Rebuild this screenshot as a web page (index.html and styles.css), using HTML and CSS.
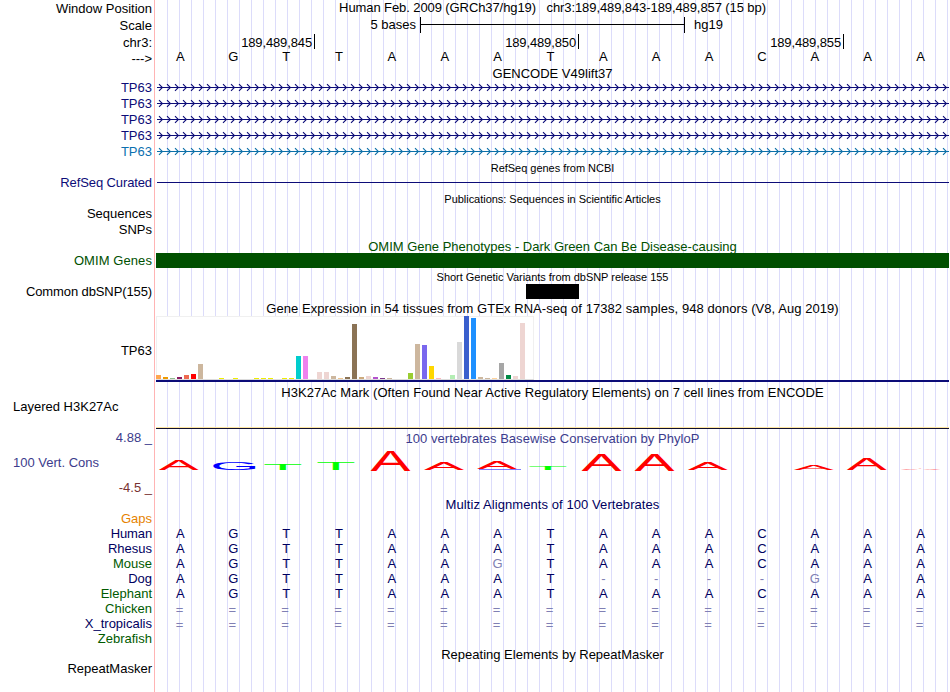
FILE: index.html
```html
<!DOCTYPE html>
<html lang="en">
<head>
<meta charset="utf-8">
<title>chr3:189,489,843-189,489,857</title>
<link rel="stylesheet" href="styles.css">
</head>
<body>
<main class="browser">
  <section class="labels">
    <div class="lb first">Window Position</div>
    <div class="lb g2">Scale</div>
    <div class="lb g2">chr3:</div>
    <div class="lb g1">---&gt;</div>
    <div class="lb g14 gene">TP63</div>
    <div class="lb g1 gene">TP63</div>
    <div class="lb g1 gene">TP63</div>
    <div class="lb g1 gene">TP63</div>
    <div class="lb g1 gene-alt">TP63</div>
    <div class="lb g16 gene tight">RefSeq Curated</div>
    <div class="lb g16">Sequences</div>
    <div class="lb g1">SNPs</div>
    <div class="lb g16 omim wide">OMIM Genes</div>
    <div class="lb g16 tight">Common dbSNP(155)</div>
    <div class="lb g44">TP63</div>
    <div class="lb g41 left">Layered H3K27Ac</div>
    <div class="lb g16 cons">4.88 _</div>
    <div class="lb g10 left cons">100 Vert. Cons</div>
    <div class="lb g10 neg">-4.5 _</div>
    <div class="lb g16 gaps">Gaps</div>
    <div class="lb navy tight">Human</div>
    <div class="lb navy">Rhesus</div>
    <div class="lb green">Mouse</div>
    <div class="lb navy">Dog</div>
    <div class="lb green">Elephant</div>
    <div class="lb green">Chicken</div>
    <div class="lb navy">X_tropicalis</div>
    <div class="lb green">Zebrafish</div>
    <div class="lb g15">RepeatMasker</div>
  </section>

  <section class="tracks">
    <div class="title position">Human Feb. 2009 (GRCh37/hg19) &nbsp; chr3:189,489,843-189,489,857 (15 bp)</div>
    <div class="scale"><span class="scale-size">5 bases</span><span class="scale-bar"></span><span class="scale-db">hg19</span></div>
    <div class="ruler"><span>189,489,845</span><span>189,489,850</span><span>189,489,855</span></div>
    <div class="bases"><i>A</i><i>G</i><i>T</i><i>T</i><i>A</i><i>A</i><i>A</i><i>T</i><i>A</i><i>A</i><i>A</i><i>C</i><i>A</i><i>A</i><i>A</i></div>

    <div class="title gencode">GENCODE V49lift37</div>
    <svg class="introns" width="793" height="79" viewBox="0 0 793 79">
      <defs>
        <pattern id="chevMain" width="8" height="16" patternUnits="userSpaceOnUse" x="2" y="0">
          <path d="M1 4.1 L4.4 7.5 L1 10.9" fill="none" stroke="#0c0c78" stroke-width="1.1"/>
        </pattern>
        <pattern id="chevAlt" width="8" height="16" patternUnits="userSpaceOnUse" x="2" y="0">
          <path d="M1 4.1 L4.4 7.5 L1 10.9" fill="none" stroke="#0c70a8" stroke-width="1.1"/>
        </pattern>
      </defs>
      <rect x="2" y="0" width="791" height="64" fill="url(#chevMain)"/>
      <rect x="2" y="64" width="791" height="15" fill="url(#chevAlt)"/>
      <path d="M1 7h792v1H1zM1 23h792v1H1zM1 39h792v1H1zM1 55h792v1H1z" fill="#0c0c78"/>
      <path d="M1 71h792v1H1z" fill="#0c70a8"/>
    </svg>

    <div class="title small refseq">RefSeq genes from NCBI</div>
    <div class="refseq-line"></div>
    <div class="title small pubs">Publications: Sequences in Scientific Articles</div>
    <div class="title omim omim-title">OMIM Gene Phenotypes - Dark Green Can Be Disease-causing</div>
    <div class="omim-bar"></div>
    <div class="title small snp-title">Short Genetic Variants from dbSNP release 155</div>
    <div class="snp"></div>

    <div class="title gtex-title">Gene Expression in 54 tissues from GTEx RNA-seq of 17382 samples, 948 donors (V8, Aug 2019)</div>
    <div class="gtex">
      <div class="bars">
        <b style="height:4px;background:#ffa54f"></b><b style="height:2px;background:#ee9a00"></b><b style="height:1px;background:#8fbc8f"></b><b style="height:2px;background:#8b1c62"></b><b style="height:4px;background:#ee6a50"></b><b style="height:5px;background:#ff0000"></b><b style="height:15px;background:#cdb79e"></b><b></b><b></b>
        <b style="height:1px;background:#eeee00"></b><b></b><b style="height:1px;background:#eeee00"></b><b></b><b></b><b style="height:1px;background:#eeee00"></b><b style="height:1px;background:#eeee00"></b><b style="height:1px;background:#eeee00"></b><b></b>
        <b style="height:1px;background:#eeee00"></b><b style="height:1px;background:#eeee00"></b><b style="height:23px;background:#00cdcd"></b><b style="height:23px;background:#ee82ee"></b><b></b><b style="height:7px;background:#eed5d2"></b><b style="height:7px;background:#eed5d2"></b><b style="height:3px;background:#cdb79e"></b><b style="height:1px;background:#eec591"></b>
        <b style="height:2px;background:#8b7355"></b><b style="height:55px;background:#8b7355"></b><b style="height:2px;background:#cdaa7d"></b><b style="height:3px;background:#eed5d2"></b><b style="height:2px;background:#b452cd"></b><b style="height:1px;background:#7a378b"></b><b style="height:1px;background:#cdb79e"></b><b></b><b></b>
        <b style="height:6px;background:#9acd32"></b><b style="height:35px;background:#cdb79e"></b><b style="height:34px;background:#7a67ee"></b><b style="height:13px;background:#ffd700"></b><b style="height:1px;background:#ffb6c1"></b><b></b><b style="height:4px;background:#b4eeb4"></b><b style="height:37px;background:#d9d9d9"></b><b style="height:63px;background:#3a5fcd"></b>
        <b style="height:61px;background:#1e90ff"></b><b style="height:2px;background:#cdb79e"></b><b style="height:1px;background:#cdb79e"></b><b style="height:1px;background:#ffd39b"></b><b style="height:16px;background:#a6a6a6"></b><b style="height:4px;background:#008b45"></b><b style="height:3px;background:#eed5d2"></b><b style="height:56px;background:#eed5d2"></b><b></b>
      </div>
    </div>

    <div class="title h3k-title">H3K27Ac Mark (Often Found Near Active Regulatory Elements) on 7 cell lines from ENCODE</div>
    <div class="h3k-line"></div>

    <div class="title cons cons-title">100 vertebrates Basewise Conservation by PhyloP</div>
    <svg class="logo" width="793" height="28" viewBox="156 446 793 28">
      <g class="la">
        <text transform="matrix(6 0 0 1.55 158.8 469.7)">A</text>
        <text transform="matrix(6 0 0 2.86 370.6 470.7)">A</text>
        <text transform="matrix(6 0 0 1.13 424 469.7)">A</text>
        <text transform="matrix(6 0 0 1.02 477 469)">A</text>
        <text transform="matrix(6 0 0 2.42 581.6 470.7)">A</text>
        <text transform="matrix(6 0 0 2.42 634.6 470.7)">A</text>
        <text transform="matrix(6 0 0 1.13 687.8 469.7)">A</text>
        <text transform="matrix(6 0 0 0.7 793.8 469.7)">A</text>
        <text transform="matrix(6 0 0 1.6 846.8 470)">A</text>
        <text transform="matrix(6 0 0 0.13 900.5 469.9)">A</text>
      </g>
      <g class="lg">
        <text transform="matrix(6.4 0 0 1.08 210 469.8)">G</text>
        <path d="M479 469h42v0.6h-42z"/>
      </g>
      <g class="lt">
        <text transform="matrix(6.5 0 0 0.88 262.9 470)">T</text>
        <text transform="matrix(6.5 0 0 1.16 315.9 470)">T</text>
        <text transform="matrix(6.5 0 0 0.57 527.9 470)">T</text>
      </g>
    </svg>

    <div class="title navy multiz">Multiz Alignments of 100 Vertebrates</div>
    <div class="alignment navy">
      <div class="bases"><i>A</i><i>G</i><i>T</i><i>T</i><i>A</i><i>A</i><i>A</i><i>T</i><i>A</i><i>A</i><i>A</i><i>C</i><i>A</i><i>A</i><i>A</i></div>
      <div class="bases"><i>A</i><i>G</i><i>T</i><i>T</i><i>A</i><i>A</i><i>A</i><i>T</i><i>A</i><i>A</i><i>A</i><i>C</i><i>A</i><i>A</i><i>A</i></div>
      <div class="bases"><i>A</i><i>G</i><i>T</i><i>T</i><i>A</i><i>A</i><i class="dim">G</i><i>T</i><i>A</i><i>A</i><i>A</i><i>C</i><i>A</i><i>A</i><i>A</i></div>
      <div class="bases"><i>A</i><i>G</i><i>T</i><i>T</i><i>A</i><i>A</i><i>A</i><i>T</i><i class="dim">-</i><i class="dim">-</i><i class="dim">-</i><i class="dim">-</i><i class="dim">G</i><i>A</i><i>A</i></div>
      <div class="bases"><i>A</i><i>G</i><i>T</i><i>T</i><i>A</i><i>A</i><i>A</i><i>T</i><i>A</i><i>A</i><i>A</i><i>C</i><i>A</i><i>A</i><i>A</i></div>
      <div class="bases dim gap"><i>=</i><i>=</i><i>=</i><i>=</i><i>=</i><i>=</i><i>=</i><i>=</i><i>=</i><i>=</i><i>=</i><i>=</i><i>=</i><i>=</i><i>=</i></div>
      <div class="bases dim gap"><i>=</i><i>=</i><i>=</i><i>=</i><i>=</i><i>=</i><i>=</i><i>=</i><i>=</i><i>=</i><i>=</i><i>=</i><i>=</i><i>=</i><i>=</i></div>
    </div>
    <div class="title repeats">Repeating Elements by RepeatMasker</div>
  </section>
</main>
</body>
</html>
```
FILE: styles.css
```css
body { margin: 0; background: #fff; }

.browser {
  display: flex;
  width: 949px;
  height: 692px;
  overflow: hidden;
  font: 13px/15px "Liberation Sans", Arial, Helvetica, sans-serif;
  color: #000;
}

/* Left label column */
.labels {
  box-sizing: border-box;
  width: 155px;
  border-right: 1px solid #ffb4b4;
  padding-right: 2px;
  text-align: right;
  flex: none;
}
.lb { height: 15px; white-space: nowrap; }
.first { padding-top: 1px; }
.g1 { margin-top: 1px; }
.g2 { margin-top: 2px; }
.g10 { margin-top: 10px; }
.g14 { margin-top: 14px; }
.g15 { margin-top: 15px; }
.g16 { margin-top: 16px; }
.g41 { margin-top: 41px; }
.g44 { margin-top: 44px; }
.left { text-align: left; padding-left: 13px; }
.tight { letter-spacing: -0.11px; }
.wide { letter-spacing: 0.08px; }

.gene { color: #0c0c78; }
.gene-alt { color: #0c70b0; }
.omim { color: #005000; }
.cons { color: #3c3c8c; }
.neg { color: #783232; }
.gaps { color: #e68200; }
.navy { color: #000060; }
.green { color: #005a00; }
.dim { color: #8080b4; }

/* Track column, with a guide line every 12px */
.tracks {
  display: flex;
  flex-direction: column;
  flex: none;
  width: 793px;
  margin-left: 1px;
  background: repeating-linear-gradient(90deg, transparent 0 11px, #dcdcfa 11px 12px);
}
.title { height: 15px; text-align: center; white-space: nowrap; flex: none; }
.small { height: 12px; font-size: 11px; line-height: 12px; letter-spacing: -0.03px; }
.position { letter-spacing: -0.09px; }

.scale { display: flex; height: 16px; margin-top: 2px; }
.scale-size { width: 260px; text-align: right; }
.scale-bar {
  box-sizing: border-box;
  width: 265px;
  margin-left: 4px;
  border: solid #000;
  border-width: 0 1px;
  background: linear-gradient(#000, #000) 0 7px / 100% 1px no-repeat;
}
.scale-db { margin-left: 9px; }

.ruler { display: flex; height: 15px; margin-top: 1px; line-height: 17px; letter-spacing: -0.13px; }
.ruler span {
  box-sizing: border-box;
  width: 264px;
  padding-right: 2px;
  border-right: 1px solid #000;
  text-align: right;
}
.ruler span:first-child { width: 159px; }
.ruler span:last-child { width: 265px; }

.bases {
  display: grid;
  grid-template-columns: repeat(15, 52.87px);
  height: 15px;
  margin-left: -2px;
  text-align: center;
}
.bases i { font-style: normal; }
.gap { line-height: 17px; margin-left: -3px; }

.gencode { margin-top: 2px; }
.introns { display: block; flex: none; margin-top: -1px; }
.refseq { margin-top: 3px; }
.refseq-line { height: 1px; margin: 8px 0 0 1px; background: #0c0c78; }
.pubs { margin-top: 10px; }
.omim-title { height: 14px; margin-top: 34px; }
.omim-bar { height: 15px; background: #005000; }
.snp-title { margin-top: 3px; }
.snp { width: 53px; height: 15px; margin: 1px 0 0 370px; background: #000; }

.gtex-title { margin-top: 2px; letter-spacing: 0.057px; }
.gtex { height: 64px; border-bottom: 2px solid #0c0c78; }
.bars {
  box-sizing: border-box;
  display: flex;
  align-items: flex-end;
  gap: 2px;
  width: 378px;
  height: 64px;
  border-bottom: 1px solid #dcdcdc;
  background: #fff;
  box-shadow: inset 0 1px #f0f0f0, inset -1px 0 #f0f0f0, inset 1px 0 #f0f0f0;
}
.bars b { width: 5px; flex: none; }

.h3k-title { margin-top: 3px; letter-spacing: 0.057px; }
.h3k-line { height: 1px; margin-top: 27px; border-top: 1px solid #ffe6a0; background: #101030; }

.cons-title { margin-top: 2px; letter-spacing: 0.045px; }
.logo { display: block; flex: none; overflow: visible; font: 10px "Liberation Sans", Arial, sans-serif; }
.la { fill: #f00; }
.lg { fill: #00f; }
.lt { fill: #0f0; }

.multiz { margin-top: 23px; letter-spacing: 0.08px; }
.alignment { margin-top: 14px; }
.repeats { margin-top: 16px; }
```
